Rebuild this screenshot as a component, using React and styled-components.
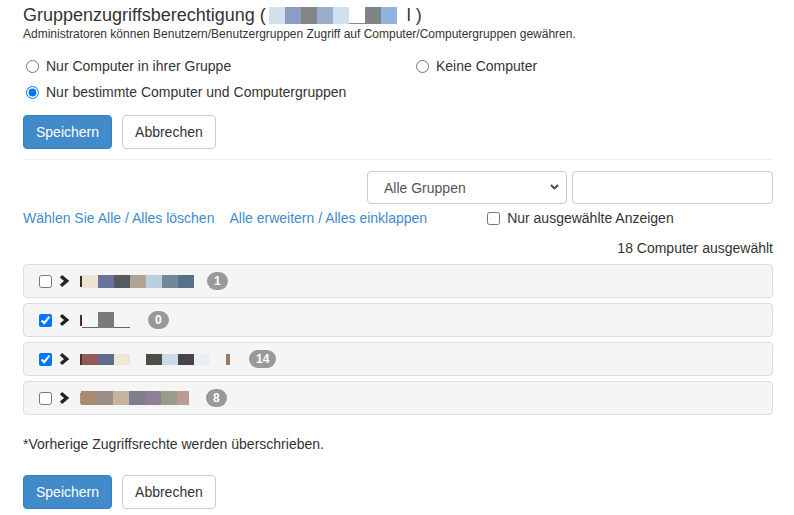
import React from "react";
import styled, { createGlobalStyle } from "styled-components";

const GlobalStyle = createGlobalStyle`
  body {
    margin: 0;
    background: #fff;
    font-family: "Liberation Sans", Arial, sans-serif;
    color: #333;
  }
`;

const Page = styled.div`
  width: 750px;
  padding: 5px 0 0 23px;
`;

const Title = styled.h3`
  margin: 0;
  font-size: 18px;
  font-weight: normal;
  line-height: 20px;
  display: flex;
  align-items: center;
`;

const Hint = styled.p`
  margin: 1px 0 0;
  font-size: 12px;
  line-height: 17px;
`;

const RadioGrid = styled.div`
  display: grid;
  grid-template-columns: 390px 1fr;
  row-gap: 6px;
  margin-top: 13px;
`;

const Choice = styled.label`
  display: flex;
  align-items: center;
  gap: 7px;
  padding-left: 3px;
  font-size: 14px;
  line-height: 20px;
  input {
    margin: 0;
    width: 13px;
    height: 13px;
  }
`;

const Actions = styled.div`
  display: flex;
  gap: 10px;
  margin-top: ${p => p.$top}px;
`;

const Button = styled.button`
  font-family: inherit;
  font-size: 14px;
  line-height: 20px;
  padding: 6px 12px;
  border-radius: 4px;
  border: 1px solid ${p => (p.$primary ? "#357ebd" : "#ccc")};
  background: ${p => (p.$primary ? "#428bca" : "#fff")};
  color: ${p => (p.$primary ? "#fff" : "#333")};
`;

const Divider = styled.hr`
  margin: 10px 0 0;
  border: 0;
  border-top: 1px solid #eee;
`;

const Filters = styled.div`
  display: flex;
  justify-content: flex-end;
  gap: 5px;
  margin-top: 11px;
`;

const SelectWrap = styled.div`
  position: relative;
  width: 200px;
  svg {
    position: absolute;
    right: 8px;
    top: 13px;
    pointer-events: none;
  }
`;

const Select = styled.select`
  appearance: none;
  width: 100%;
  height: 33px;
  padding: 0 16px;
  font-family: inherit;
  font-size: 14px;
  color: #555;
  background: #fff;
  border: 1px solid #ccc;
  border-radius: 4px;
`;

const Search = styled.input`
  box-sizing: border-box;
  width: 201px;
  height: 33px;
  border: 1px solid #ccc;
  border-radius: 4px;
`;

const Links = styled.div`
  display: flex;
  align-items: center;
  margin-top: 4px;
  font-size: 14px;
  line-height: 20px;
`;

const Link = styled.a`
  color: #428bca;
  text-decoration: none;
  margin-right: 15px;
`;

const OnlySelected = styled.label`
  display: flex;
  align-items: center;
  gap: 7px;
  margin-left: 45px;
  input {
    margin: 0;
    width: 13px;
    height: 13px;
  }
`;

const Count = styled.div`
  margin-top: 10px;
  text-align: right;
  font-size: 14px;
  line-height: 20px;
`;

const List = styled.div`
  display: flex;
  flex-direction: column;
  gap: 5px;
  margin-top: 6px;
`;

const Row = styled.div`
  display: flex;
  align-items: center;
  height: 34px;
  box-sizing: border-box;
  padding: 0 15px;
  background: #f5f5f5;
  border: 1px solid #ddd;
  border-radius: 4px;
  input {
    margin: 0;
    width: 13px;
    height: 13px;
  }
  svg {
    margin-left: 7px;
  }
`;

const Name = styled.span`
  display: flex;
  align-items: center;
  margin-left: 11px;
`;

const Redacted = styled.span`
  display: flex;
  align-items: center;
  height: 17px;
  margin-left: 3px;
`;

const Block = styled.span`
  display: block;
  width: ${p => p.$w}px;
  height: ${p => p.$h}px;
  background: ${p => p.$c};
  align-self: ${p => (p.$line ? "flex-end" : "center")};
`;

const Badge = styled.span`
  margin-left: ${p => p.$gap}px;
  padding: 3px 7px;
  border-radius: 10px;
  background: #999;
  color: #fff;
  font-size: 12px;
  font-weight: bold;
  line-height: 12px;
`;

const Note = styled.p`
  margin: 19px 0 0;
  font-size: 14px;
  line-height: 20px;
`;

const titleBlocks = ["#d3e0ec", "#8a9ec4", "#858585", "#98aecb", "#cfe0f0", null, "#7f8488", "#92b4dc"];

const groups = [
  {
    checked: false,
    count: 1,
    gap: 13,
    h: 13,
    parts: [["#3a2a20", 2], "#ede3d3", "#6873a0", "#545b5f", "#b0a595", "#b8cfdd", "#73879b", "#587089"],
  },
  {
    checked: true,
    count: 0,
    gap: 18,
    h: 16,
    parts: [["#5a2a20", 2], ["line", 16], "#7a7a7a", ["line", 16]],
  },
  {
    checked: true,
    count: 14,
    gap: 19,
    h: 11,
    parts: [
      ["#4a3020", 2], "#945a5a", "#5f6a8e", "#efe6d6", "transparent",
      "#4a4d48", "#c8dbe6", "#484249", "#e8eef2", "transparent", ["#a07a5e", 4],
    ],
  },
  {
    checked: false,
    count: 8,
    gap: 17,
    h: 14,
    parts: [["#c89050", 1], "#a68b6f", "#998e8c", "#c6b49c", "#807c8e", "#8c7f96", "#9a9c8a", ["#b89c94", 12]],
  },
];

const Chevron = () => (
  <svg width="10" height="12" viewBox="0 0 10 12">
    <path d="M2 1.3 L7.6 6 L2 10.7" fill="none" stroke="#222" strokeWidth="3.4" />
  </svg>
);

const SaveBar = ({ top }) => (
  <Actions $top={top}>
    <Button $primary>Speichern</Button>
    <Button>Abbrechen</Button>
  </Actions>
);

const renderPart = (part, h, i) => {
  const [c, w] = Array.isArray(part) ? part : [part, 16];
  if (c === "line") return <Block key={i} $w={w} $h={1} $c="#666" $line />;
  return <Block key={i} $w={w} $h={w < 5 ? Math.min(h, 11) : h} $c={c} />;
};

export default function App() {
  return (
    <>
      <GlobalStyle />
      <Page>
        <Title>
          Gruppenzugriffsberechtigung (
          <Redacted>
            {titleBlocks.map((c, i) =>
              c ? <Block key={i} $w={16} $h={17} $c={c} /> : <Block key={i} $w={16} $h={1} $c="#888" $line />
            )}
          </Redacted>
          &nbsp;&nbsp;l )
        </Title>
        <Hint>
          Administratoren können Benutzern/Benutzergruppen Zugriff auf Computer/Computergruppen gewähren.
        </Hint>

        <RadioGrid>
          <Choice>
            <input type="radio" name="scope" />
            Nur Computer in ihrer Gruppe
          </Choice>
          <Choice>
            <input type="radio" name="scope" />
            Keine Computer
          </Choice>
          <Choice>
            <input type="radio" name="scope" defaultChecked />
            Nur bestimmte Computer und Computergruppen
          </Choice>
        </RadioGrid>

        <SaveBar top={13} />
        <Divider />

        <Filters>
          <SelectWrap>
            <Select defaultValue="all">
              <option value="all">Alle Gruppen</option>
            </Select>
            <svg width="9" height="6" viewBox="0 0 9 6">
              <path d="M1 1 L4.5 4.5 L8 1" fill="none" stroke="#444" strokeWidth="1.8" />
            </svg>
          </SelectWrap>
          <Search type="text" />
        </Filters>

        <Links>
          <Link href="#">Wählen Sie Alle / Alles löschen</Link>
          <Link href="#">Alle erweitern / Alles einklappen</Link>
          <OnlySelected>
            <input type="checkbox" />
            Nur ausgewählte Anzeigen
          </OnlySelected>
        </Links>

        <Count>18 Computer ausgewählt</Count>

        <List>
          {groups.map((g, i) => (
            <Row key={i}>
              <input type="checkbox" defaultChecked={g.checked} />
              <Chevron />
              <Name>{g.parts.map((p, j) => renderPart(p, g.h, j))}</Name>
              <Badge $gap={g.gap}>{g.count}</Badge>
            </Row>
          ))}
        </List>

        <Note>*Vorherige Zugriffsrechte werden überschrieben.</Note>
        <SaveBar top={21} />
      </Page>
    </>
  );
}
